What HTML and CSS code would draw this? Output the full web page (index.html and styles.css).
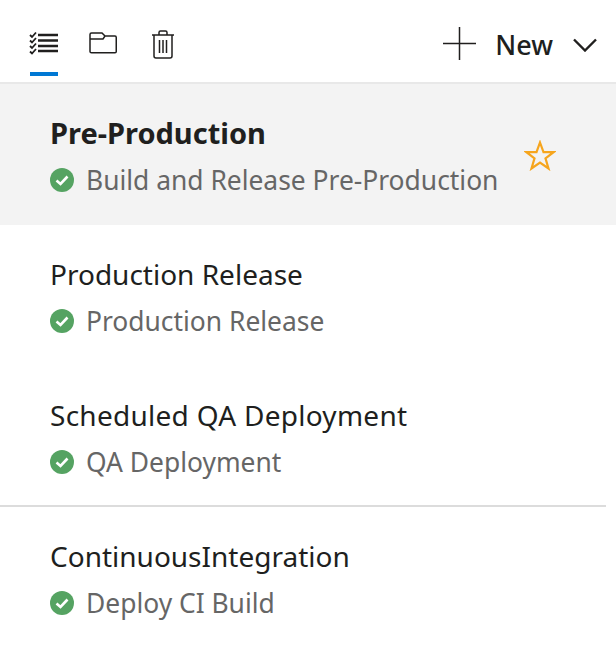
FILE: index.html
```html
<!DOCTYPE html>
<html lang="en">
<head>
<meta charset="utf-8">
<title>Release pipelines</title>
<link rel="stylesheet" href="styles.css">
</head>
<body>
<header class="toolbar">
  <div class="tabs">
    <div class="tab tab-active">
      <svg class="icon" width="30" height="24" viewBox="0 0 30 24" fill="none" stroke="#201f1e">
        <path d="M9 4H29M9 9.500H29M9 15H29M9 20H29" stroke-width="2.400"/>
        <path d="M1 4L3 6L7 1.500M1 9.500L3 11.500L7 7M1 15L3 17L7 12.500M1 20.500L3 22.500L7 18" stroke-width="1.800"/>
      </svg>
    </div>
    <div class="tab tab-folder">
      <svg class="icon" width="28" height="22" viewBox="0 0 28 22" fill="none" stroke="#201f1e" stroke-width="1.500">
        <path d="M1 2.500Q1 1 2.500 1H13L16 4H26Q27.250 4 27.250 5.500V19.500Q27.250 20.750 26 20.750H2.500Q1 20.750 1 19.500Z"/>
        <path d="M1 7H14L16 4"/>
      </svg>
    </div>
    <div class="tab tab-trash">
      <svg class="icon" width="24" height="29" viewBox="0 0 24 29" fill="none" stroke="#201f1e" stroke-width="1.500">
        <path d="M1 5H23M8 5V2.500Q8 1 9.500 1H14.500Q16 1 16 2.500V5"/>
        <path d="M3 5V26Q3 28 5 28H19Q21 28 21 26V5"/>
        <path d="M8.500 10V23M12 10V23M15.500 10V23"/>
      </svg>
    </div>
  </div>
  <button class="new-btn" type="button">
    <svg class="icon" width="33" height="33" viewBox="0 0 33 33" fill="none" stroke="#201f1e" stroke-width="1.500">
      <path d="M16.500 0V33M0 16.500H33"/>
    </svg>
    <span class="new-label">New</span>
    <svg class="icon chevron" width="24" height="14" viewBox="0 0 24 14" fill="none" stroke="#201f1e" stroke-width="2.400">
      <path d="M1 1.500L12 12.500L23 1.500"/>
    </svg>
  </button>
</header>
<ul class="list">
  <li class="row row-selected">
    <div class="row-text">
      <div class="row-title title-bold">Pre-Production</div>
      <div class="row-sub">
        <svg class="status" width="24" height="24" viewBox="0 0 24 24"><circle cx="12" cy="12" r="12" fill="#55a362"/><path d="M6.500 12.500L10.500 16L17.500 8.500" fill="none" stroke="#fff" stroke-width="2.600"/></svg>
        <span>Build and Release Pre-Production</span>
      </div>
    </div>
    <svg class="star" width="32" height="31" viewBox="0 0 32 31" fill="none" stroke="#f6a51d" stroke-width="2.200">
      <path d="M16 2.500L19.500 12.200H29.500L21.500 18.300L24.500 28.500L16 22.500L7.500 28.500L10.500 18.300L2.500 12.200H12.500Z"/>
    </svg>
  </li>
  <li class="row">
    <div class="row-text">
      <div class="row-title">Production Release</div>
      <div class="row-sub">
        <svg class="status" width="24" height="24" viewBox="0 0 24 24"><circle cx="12" cy="12" r="12" fill="#55a362"/><path d="M6.500 12.500L10.500 16L17.500 8.500" fill="none" stroke="#fff" stroke-width="2.600"/></svg>
        <span>Production Release</span>
      </div>
    </div>
  </li>
  <li class="row row-short">
    <div class="row-text">
      <div class="row-title title-wide">Scheduled QA Deployment</div>
      <div class="row-sub">
        <svg class="status" width="24" height="24" viewBox="0 0 24 24"><circle cx="12" cy="12" r="12" fill="#55a362"/><path d="M6.500 12.500L10.500 16L17.500 8.500" fill="none" stroke="#fff" stroke-width="2.600"/></svg>
        <span>QA Deployment</span>
      </div>
    </div>
  </li>
  <li class="divider"></li>
  <li class="row row-last">
    <div class="row-text">
      <div class="row-title">ContinuousIntegration</div>
      <div class="row-sub">
        <svg class="status" width="24" height="24" viewBox="0 0 24 24"><circle cx="12" cy="12" r="12" fill="#55a362"/><path d="M6.500 12.500L10.500 16L17.500 8.500" fill="none" stroke="#fff" stroke-width="2.600"/></svg>
        <span>Deploy CI Build</span>
      </div>
    </div>
  </li>
</ul>
</body>
</html>
```
FILE: styles.css
```css
* { box-sizing: border-box; }
html, body { margin: 0; padding: 0; background: #fff; }
body { width: 616px; height: 662px; overflow: hidden; font-family: "Noto Sans", "Open Sans", sans-serif; color: #201f1e; }
.icon { display: block; flex: none; }
.toolbar { height: 84px; border-bottom: 2px solid #e8e8e8; display: flex; justify-content: space-between; align-items: stretch; padding: 0 19px 0 30px; }
.tabs { display: flex; gap: 31px; }
.tab { width: 28px; height: 82px; padding-top: 31px; display: flex; justify-content: center; align-items: flex-start; position: relative; }
.tab-folder { padding-top: 32px; }
.tab-trash { padding-top: 30px; margin-left: 1px; }
.tab-active::after { content: ""; position: absolute; left: 0; bottom: 6px; width: 28px; height: 4px; background: #0078d4; }
.new-btn { display: flex; align-items: center; padding: 5px 0 0; border: 0; background: none; font: inherit; color: inherit; }
.new-label { font-size: 27px; font-weight: 500; margin: 2px 20px 0 19px; }
.chevron { margin-top: 3px; }
.list { list-style: none; margin: 0; padding: 0; }
.row { height: 141px; padding: 29px 50px 0; display: flex; justify-content: space-between; }
.row-selected { background: #f3f3f3; padding-right: 60px; }
.row-short { height: 139px; }
.row-last { height: 130px; }
.row-title { font-size: 28px; line-height: 40px; font-weight: 400; color: #201f1e; }
.title-bold { font-size: 29px; font-weight: 700; }
.title-wide { letter-spacing: 0.270px; }
.row-sub { display: flex; align-items: center; gap: 12px; margin-top: 7px; font-size: 26.400px; line-height: 40px; color: #666; }
.status { flex: none; }
.star { flex: none; margin-top: 27px; }
.divider { height: 2px; width: 606px; background: #dcdcdc; }
```
